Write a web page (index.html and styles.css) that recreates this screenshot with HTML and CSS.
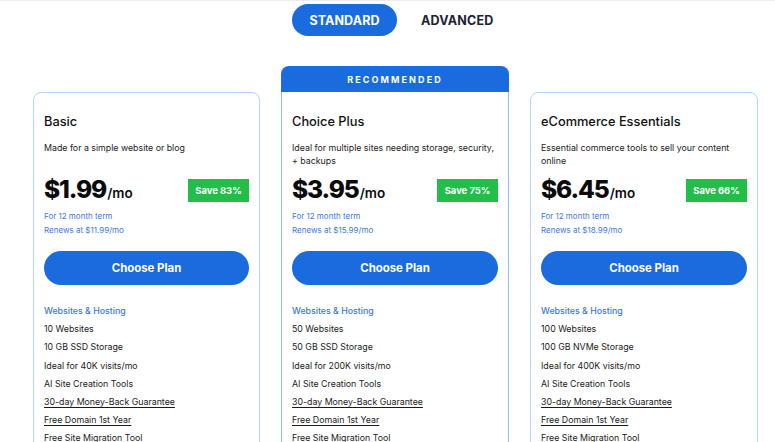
FILE: index.html
```html
<!DOCTYPE html>
<html lang="en">
<head>
<meta charset="utf-8">
<title>Plans</title>
<link rel="stylesheet" href="styles.css">
</head>
<body>
<div class="page">
  <div class="toggle">
    <span class="tab tab-active">STANDARD</span>
    <span class="tab">ADVANCED</span>
  </div>
  <div class="cards">
    <div class="card">
      <h2 class="title">Basic</h2>
      <p class="desc">Made for a simple website or blog</p>
      <div class="price-row">
        <div class="price"><span class="amount">$1.99</span><span class="per">/mo</span></div>
        <span class="save">Save 83%</span>
      </div>
      <p class="term">For 12 month term<br>Renews at $11.99/mo</p>
      <button class="choose">Choose Plan</button>
      <ul class="features">
        <li class="feat-head">Websites &amp; Hosting</li>
        <li>10 Websites</li>
        <li>10 GB SSD Storage</li>
        <li>Ideal for 40K visits/mo</li>
        <li>AI Site Creation Tools</li>
        <li class="ul">30-day Money-Back Guarantee</li>
        <li class="ul">Free Domain 1st Year</li>
        <li>Free Site Migration Tool</li>
      </ul>
    </div>
    <div class="card-wrap">
      <div class="ribbon">RECOMMENDED</div>
      <div class="card card-featured">
        <h2 class="title">Choice Plus</h2>
        <p class="desc">Ideal for multiple sites needing storage, security, + backups</p>
        <div class="price-row">
          <div class="price"><span class="amount">$3.95</span><span class="per">/mo</span></div>
          <span class="save">Save 75%</span>
        </div>
        <p class="term">For 12 month term<br>Renews at $15.99/mo</p>
        <button class="choose">Choose Plan</button>
        <ul class="features">
          <li class="feat-head">Websites &amp; Hosting</li>
          <li>50 Websites</li>
          <li>50 GB SSD Storage</li>
          <li>Ideal for 200K visits/mo</li>
          <li>AI Site Creation Tools</li>
          <li class="ul">30-day Money-Back Guarantee</li>
          <li class="ul">Free Domain 1st Year</li>
          <li>Free Site Migration Tool</li>
        </ul>
      </div>
    </div>
    <div class="card">
      <h2 class="title">eCommerce Essentials</h2>
      <p class="desc">Essential commerce tools to sell your content online</p>
      <div class="price-row">
        <div class="price"><span class="amount">$6.45</span><span class="per">/mo</span></div>
        <span class="save">Save 66%</span>
      </div>
      <p class="term">For 12 month term<br>Renews at $18.99/mo</p>
      <button class="choose">Choose Plan</button>
      <ul class="features">
        <li class="feat-head">Websites &amp; Hosting</li>
        <li>100 Websites</li>
        <li>100 GB NVMe Storage</li>
        <li>Ideal for 400K visits/mo</li>
        <li>AI Site Creation Tools</li>
        <li class="ul">30-day Money-Back Guarantee</li>
        <li class="ul">Free Domain 1st Year</li>
        <li>Free Site Migration Tool</li>
      </ul>
    </div>
  </div>
</div>
</body>
</html>
```

FILE: styles.css
```css
* { box-sizing: border-box; }
html, body { margin: 0; padding: 0; background: #fff; }
body {
  font-family: Inter, "Liberation Sans", sans-serif;
  color: #1a1a1a;
  overflow: hidden;
  height: 442px;
}
.page {
  border-top: 1px solid #ededed;
}
.toggle {
  display: flex;
  align-items: center;
  padding-top: 3px;
  padding-left: 292px;
  gap: 8px;
}
.tab {
  display: flex;
  align-items: center;
  justify-content: center;
  height: 32px;
  padding: 0 16px;
  font-size: 12.5px;
  font-weight: 700;
  color: #1c2333;
  letter-spacing: 0.2px;
}
.tab-active {
  width: 105px;
  background: #196bde;
  color: #fff;
  border-radius: 16px;
  letter-spacing: 0.1px;
}
.cards {
  display: grid;
  grid-template-columns: 227px 228px 228px;
  column-gap: 21px;
  align-items: start;
  padding-left: 33px;
  margin-top: 30px;
}
.card {
  border: 1px solid #b3d3f8;
  border-radius: 8px;
  padding: 19px 10px 0 10px;
  height: 400px;
  margin-top: 26px;
}
.card-wrap {
  display: flex;
  flex-direction: column;
}
.ribbon {
  height: 26px;
  background: #196bde;
  color: #fff;
  border-radius: 8px 8px 0 0;
  display: flex;
  align-items: center;
  justify-content: center;
  font-size: 9px;
  font-weight: 700;
  letter-spacing: 2.1px;
}
.card-featured {
  margin-top: 0;
  border-top: none;
  border-color: #8fbdf2;
  border-radius: 0;
  padding-top: 20px;
}
.title {
  margin: 0;
  font-size: 12.8px;
  line-height: 20px;
  font-weight: 500;
  color: #111;
}
.desc {
  margin: 9px 0 0;
  font-size: 8.8px;
  line-height: 13px;
  min-height: 26px;
  color: #222;
}
.price-row {
  display: flex;
  align-items: center;
  justify-content: space-between;
  margin-top: 7px;
  height: 30px;
}
.price { display: flex; align-items: baseline; }
.amount {
  font-size: 24.5px;
  font-weight: 800;
  letter-spacing: -1.1px;
  color: #0b0b0b;
}
.per {
  font-size: 13.5px;
  font-weight: 600;
  color: #0b0b0b;
  margin-left: 1px;
}
.save {
  background: #22be4a;
  color: #fff;
  font-size: 9.4px;
  font-weight: 700;
  height: 23px;
  width: 61px;
  display: flex;
  align-items: center;
  justify-content: center;
  margin-top: 2px;
}
.term {
  margin: 5px 0 0;
  font-size: 8px;
  line-height: 14px;
  color: #3d78d6;
}
.choose {
  display: block;
  width: 100%;
  margin-top: 14px;
  height: 34px;
  border: none;
  border-radius: 17px;
  background: #196bde;
  color: #fff;
  font-family: inherit;
  font-size: 11.4px;
  font-weight: 700;
}
.features {
  list-style: none;
  margin: 17px 0 0;
  padding: 0;
  font-size: 8.8px;
  line-height: 18.2px;
  color: #1a1a1a;
}
.feat-head {
  color: #3d78d6;
  font-weight: 500;
}
.ul {
  text-decoration: underline;
  text-underline-offset: 2px;
}
```
